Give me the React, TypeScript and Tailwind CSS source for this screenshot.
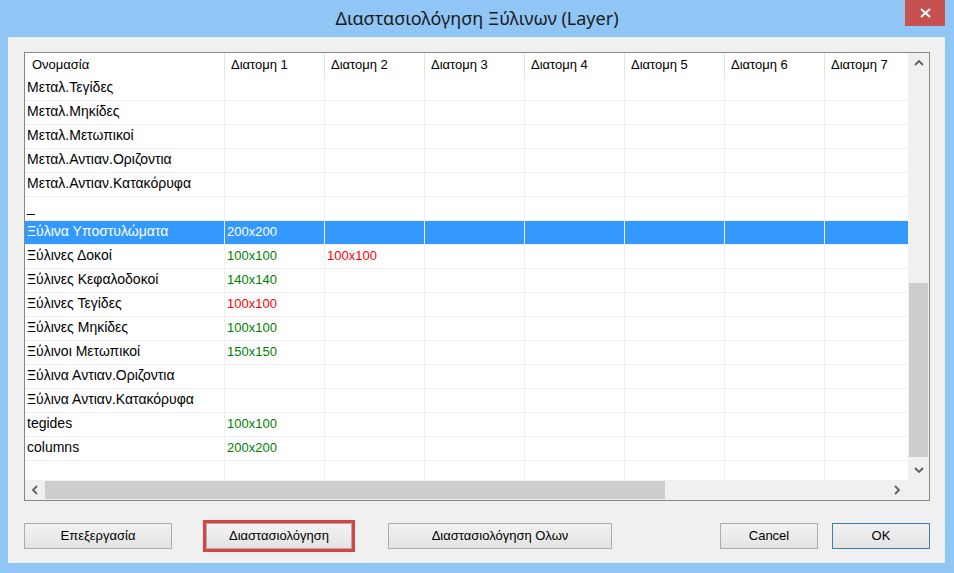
import React from 'react';

type Cell = { text: string; color?: 'green' | 'red' };

interface Row {
  name: string;
  cells: Cell[];
  selected?: boolean;
}

const colorMap: Record<string, string> = {
  green: 'text-[#008000]',
  red: 'text-[#ff0000]',
};

const headers = ['Διατομη 1', 'Διατομη 2', 'Διατομη 3', 'Διατομη 4', 'Διατομη 5', 'Διατομη 6', 'Διατομη 7'];

const rows: Row[] = [
  { name: 'Μεταλ.Τεγίδες', cells: [] },
  { name: 'Μεταλ.Μηκίδες', cells: [] },
  { name: 'Μεταλ.Μετωπικοί', cells: [] },
  { name: 'Μεταλ.Αντιαν.Οριζοντια', cells: [] },
  { name: 'Μεταλ.Αντιαν.Κατακόρυφα', cells: [] },
  { name: '_', cells: [] },
  { name: 'Ξύλινα Υποστυλώματα', cells: [{ text: '200x200' }], selected: true },
  { name: 'Ξύλινες Δοκοί', cells: [{ text: '100x100', color: 'green' }, { text: '100x100', color: 'red' }] },
  { name: 'Ξύλινες Κεφαλοδοκοί', cells: [{ text: '140x140', color: 'green' }] },
  { name: 'Ξύλινες Τεγίδες', cells: [{ text: '100x100', color: 'red' }] },
  { name: 'Ξύλινες Μηκίδες', cells: [{ text: '100x100', color: 'green' }] },
  { name: 'Ξύλινοι Μετωπικοί', cells: [{ text: '150x150', color: 'green' }] },
  { name: 'Ξύλινα Αντιαν.Οριζοντια', cells: [] },
  { name: 'Ξύλινα Αντιαν.Κατακόρυφα', cells: [] },
  { name: 'tegides', cells: [{ text: '100x100', color: 'green' }] },
  { name: 'columns', cells: [{ text: '200x200', color: 'green' }] },
  { name: '', cells: [] },
];

function Chevron({ dir }: { dir: 'up' | 'down' | 'left' | 'right' }) {
  const d = {
    up: 'M1 6 L5 2 L9 6',
    down: 'M1 2 L5 6 L9 2',
    left: 'M6 1 L2 5 L6 9',
    right: 'M2 1 L6 5 L2 9',
  }[dir];
  const vertical = dir === 'up' || dir === 'down';
  return (
    <svg width={vertical ? 10 : 8} height={vertical ? 8 : 10} viewBox={vertical ? '0 0 10 8' : '0 0 8 10'}>
      <path d={d} fill="none" stroke="#606060" strokeWidth={1.8} />
    </svg>
  );
}

function Button({ label, className = '' }: { label: string; className?: string }) {
  return (
    <div
      className={`h-[26px] flex items-center justify-center border bg-gradient-to-b from-[#f2f2f2] to-[#e3e3e3] text-[13px] text-black ${className}`}
    >
      {label}
    </div>
  );
}

export default function App() {
  return (
    <div className="w-[954px] h-[573px] bg-[#8fc6f5] flex flex-col font-['Liberation_Sans',Arial,sans-serif] overflow-hidden">
      {/* Title bar */}
      <div className="h-[37px] relative flex items-center justify-center">
        <span className="text-[18px] text-[#1b1b1b] font-['Noto_Sans',sans-serif] pb-[1px]">
          Διαστασιολόγηση Ξύλινων (Layer)
        </span>
        <div className="absolute right-[9px] top-0 w-[40px] h-[26px] bg-[#c75050] flex items-center justify-center">
          <svg width="11" height="10" viewBox="0 0 11 10">
            <path d="M1 1 L10 9 M10 1 L1 9" stroke="white" strokeWidth={2} />
          </svg>
        </div>
      </div>

      {/* Client area */}
      <div className="ml-[8px] mr-[9px] mb-[10px] flex-1 bg-[#f0f0f0] pl-[16px] pt-[15px] flex flex-col">
        {/* List view */}
        <div className="w-[906px] h-[449px] border border-[#828790] bg-white flex flex-col">
          <div className="flex h-[427px]">
            {/* Columns */}
            <div className="w-[883px] overflow-hidden">
              <div className="w-[900px]">
                <div className="flex h-[24px] items-center text-[13px] text-black">
                  <div className="w-[200px] h-full flex items-center pl-[7px] border-r border-[#e5e5e5]">Ονομασία</div>
                  {headers.map((h) => (
                    <div key={h} className="w-[100px] shrink-0 h-full flex items-center pl-[6px] border-r border-[#e5e5e5]">
                      {h}
                    </div>
                  ))}
                </div>
                {rows.map((r, i) => (
                  <div
                    key={i}
                    className={`flex h-[24px] text-[13px] ${r.selected ? 'bg-[#3399ff] text-white' : 'text-black'}`}
                  >
                    <div className="w-[200px] shrink-0 flex items-center pl-[2px] pb-[2px] text-[14px] border-r border-b border-[#f0f0f0]">
                      {r.name}
                    </div>
                    {headers.map((h, j) => {
                      const c = r.cells[j];
                      const col = c?.color && !r.selected ? colorMap[c.color] : '';
                      return (
                        <div
                          key={h}
                          className={`w-[100px] shrink-0 flex items-center pl-[2px] pb-[2px] border-r border-b border-[#f0f0f0] ${col}`}
                        >
                          {c?.text}
                        </div>
                      );
                    })}
                  </div>
                ))}
              </div>
            </div>
            {/* Vertical scrollbar */}
            <div className="w-[21px] bg-[#f0f0f0] flex flex-col items-center">
              <div className="h-[20px] w-full flex items-center justify-center">
                <Chevron dir="up" />
              </div>
              <div className="flex-1 w-full flex flex-col px-[1px]">
                <div className="h-[210px]" />
                <div className="h-[174px] bg-[#cdcdcd]" />
              </div>
              <div className="h-[20px] w-full flex items-center justify-center">
                <Chevron dir="down" />
              </div>
            </div>
          </div>
          {/* Horizontal scrollbar */}
          <div className="flex h-[20px]">
            <div className="w-[883px] bg-[#f0f0f0] flex items-center">
              <div className="w-[20px] h-full flex items-center justify-center">
                <Chevron dir="left" />
              </div>
              <div className="flex-1 h-full flex items-center py-[1px]">
                <div className="w-[620px] h-full bg-[#cdcdcd]" />
              </div>
              <div className="w-[22px] h-full flex items-center justify-center">
                <Chevron dir="right" />
              </div>
            </div>
            <div className="w-[21px] bg-[#f0f0f0]" />
          </div>
        </div>

        {/* Buttons */}
        <div className="flex items-center mt-[19px] h-[32px]">
          <Button label="Επεξεργασία" className="w-[148px] border-[#acacac]" />
          <div className="ml-[31px] border-[3px] border-[#d9453e] w-[152px] h-[32px] flex">
            <Button label="Διαστασιολόγηση" className="w-full h-full border-[#acacac]" />
          </div>
          <Button label="Διαστασιολόγηση Ολων" className="ml-[33px] w-[224px] border-[#acacac]" />
          <Button label="Cancel" className="ml-[108px] w-[98px] border-[#acacac]" />
          <Button label="OK" className="ml-[14px] w-[98px] border-[#3c7fb1]" />
        </div>
      </div>
    </div>
  );
}
